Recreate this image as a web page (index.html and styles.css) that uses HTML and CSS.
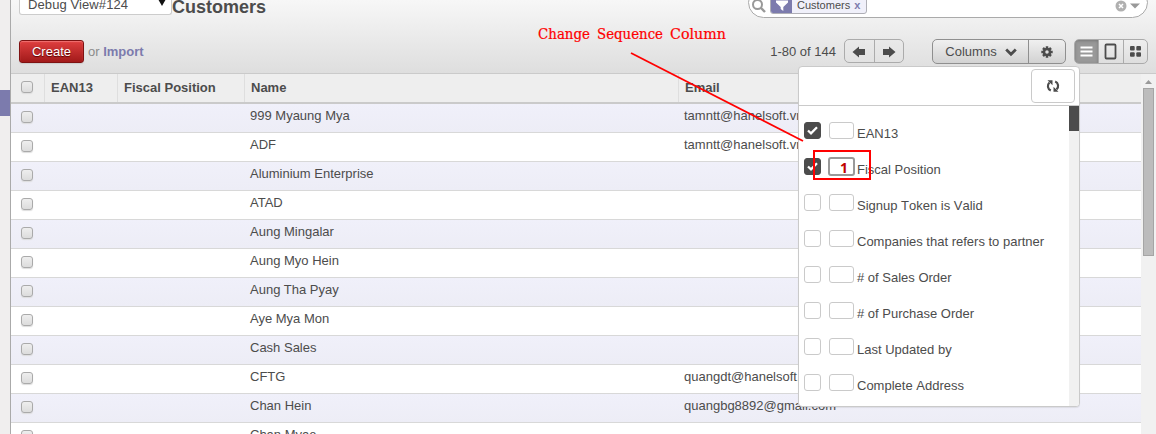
FILE: index.html
```html
<!DOCTYPE html>
<html lang="en">
<head>
<meta charset="utf-8">
<title>Customers</title>
<link rel="stylesheet" href="styles.css">
</head>
<body>
<div class="app">
  <aside class="sidebar"><div class="active-item"></div></aside>
  <main class="content">
    <header class="header">
      <div class="title-row">
        <div class="debug-select"><span>Debug View#124</span><svg width="8" height="7" viewBox="0 0 8 7"><path d="M0 0h8L4 7z" fill="#111"/></svg></div>
        <h1>Customers</h1>
        <div class="search">
          <svg class="lens" width="14" height="14" viewBox="0 0 14 14" fill="none" stroke="#999"><circle cx="5.5" cy="5.5" r="4.5" stroke-width="2"/><path d="M9 9l4 4" stroke-width="2.4"/></svg>
          <div class="facet"><span class="facet-icon"><svg width="12" height="14" viewBox="0 0 12 14"><path d="M0 2.500h12v2L7.300 9v4L4.700 11V9L0 4.500z" fill="#fff"/></svg></span><span class="facet-label">Customers <b>x</b></span></div>
          <svg class="clear" width="26" height="12" viewBox="0 0 26 12"><circle cx="6" cy="6" r="5.500" fill="#b0b0b0"/><path d="M4 4l4 4M8 4l-4 4" stroke="#fff" stroke-width="1.500"/><path d="M15 3.500h10L20 8.500z" fill="#999"/></svg>
        </div>
      </div>
      <div class="tool-row">
        <button class="create">Create</button>
        <span class="or">or <b>Import</b></span>
        <span class="range">1-80 of 144</span>
        <div class="group pager">
          <span><svg width="14" height="12" viewBox="0 0 14 12"><path d="M.5 6L7 .5V3h6v6H7v2.500z" fill="#4c4c4c"/></svg></span>
          <span><svg width="14" height="12" viewBox="0 0 14 12"><path d="M13.500 6L7 .5V3H1v6h6v2.500z" fill="#4c4c4c"/></svg></span>
        </div>
        <div class="group columns">
          <span class="columns-label">Columns <svg width="12" height="9" viewBox="0 0 12 9"><path d="M1.200 1.500L6 6.200l4.800-4.700" fill="none" stroke="#4c4c4c" stroke-width="2.800"/></svg></span>
          <span><svg width="12" height="12" viewBox="-6 -6 12 12"><circle r="3" fill="none" stroke="#4c4c4c" stroke-width="2.500"/><path d="M0-5.700v2M0 3.700v2M-5.700 0h2M3.700 0h2M-4-4l1.400 1.400M2.600 2.600L4 4M-4 4l1.400-1.400M2.600-2.600L4-4" stroke="#4c4c4c" stroke-width="2.500"/></svg></span>
        </div>
        <div class="group views">
          <span class="selected"><svg width="13" height="11" viewBox="0 0 13 11"><path d="M.5 1.500h12M.5 5.500h12M.5 9.500h12" stroke="#fff" stroke-width="1.800"/></svg></span>
          <span><svg width="13" height="17" viewBox="0 0 13 17"><rect x="1.500" y="1.500" width="10" height="14" rx="1" fill="none" stroke="#4c4c4c" stroke-width="1.800"/></svg></span>
          <span><svg width="11" height="11" viewBox="0 0 11 11" fill="#4c4c4c"><rect y="0" width="4.700" height="4.500" rx="1"/><rect x="6.300" y="0" width="4.700" height="4.500" rx="1"/><rect y="6.200" width="4.700" height="4.500" rx="1"/><rect x="6.300" y="6.200" width="4.700" height="4.500" rx="1"/></svg></span>
        </div>
      </div>
    </header>
    <div class="list-area">
      <div class="list">
        <div class="row head"><span><i class="check"></i></span><span>EAN13</span><span>Fiscal Position</span><span>Name</span><span>Email</span></div>
        <div class="row"><i class="check"></i><span class="name">999 Myaung Mya</span><span class="email">tamntt@hanelsoft.vn</span></div>
        <div class="row"><i class="check"></i><span class="name">ADF</span><span class="email">tamntt@hanelsoft.vn</span></div>
        <div class="row"><i class="check"></i><span class="name">Aluminium Enterprise</span></div>
        <div class="row"><i class="check"></i><span class="name">ATAD</span></div>
        <div class="row"><i class="check"></i><span class="name">Aung Mingalar</span></div>
        <div class="row"><i class="check"></i><span class="name">Aung Myo Hein</span></div>
        <div class="row"><i class="check"></i><span class="name">Aung Tha Pyay</span></div>
        <div class="row"><i class="check"></i><span class="name">Aye Mya Mon</span></div>
        <div class="row"><i class="check"></i><span class="name">Cash Sales</span></div>
        <div class="row"><i class="check"></i><span class="name">CFTG</span><span class="email">quangdt@hanelsoft.vn</span></div>
        <div class="row"><i class="check"></i><span class="name">Chan Hein</span><span class="email">quangbg8892@gmail.com</span></div>
        <div class="row"><i class="check"></i><span class="name">Chan Myae</span></div>
      </div>
      <div class="scrollbar"><svg width="7" height="4" viewBox="0 0 7 4"><path d="M0 4h7L3.500 0z" fill="#999"/></svg><div class="thumb"></div></div>
    </div>
  </main>

  <section class="menu">
    <div class="menu-head"><button class="refresh"><svg width="14" height="14" viewBox="0 0 14 14"><path d="M4.800 11.500A4.800 4.800 0 0 1 3.500 3.500M9.200 2.500a4.800 4.800 0 0 1 1.300 8" fill="none" stroke="#4c4c4c" stroke-width="2.200"/><path d="M1.500 1.300h5v5zM12.500 12.700h-5v-5z" fill="#4c4c4c"/></svg></button></div>
    <div class="menu-body">
      <div class="options">
        <div class="option"><i class="box on"><svg width="11" height="9" viewBox="0 0 11 9"><path d="M1 4.500L4 7.300 10 1.200" fill="none" stroke="#fff" stroke-width="2.300"/></svg></i><i class="seq"></i><span>EAN13</span></div>
        <div class="option"><i class="box on"><svg width="11" height="9" viewBox="0 0 11 9"><path d="M1 4.500L4 7.300 10 1.200" fill="none" stroke="#fff" stroke-width="2.300"/></svg></i><i class="seq focus">1</i><span>Fiscal Position</span></div>
        <div class="option"><i class="box"></i><i class="seq"></i><span>Signup Token is Valid</span></div>
        <div class="option"><i class="box"></i><i class="seq"></i><span>Companies that refers to partner</span></div>
        <div class="option"><i class="box"></i><i class="seq"></i><span># of Sales Order</span></div>
        <div class="option"><i class="box"></i><i class="seq"></i><span># of Purchase Order</span></div>
        <div class="option"><i class="box"></i><i class="seq"></i><span>Last Updated by</span></div>
        <div class="option"><i class="box"></i><i class="seq"></i><span>Complete Address</span></div>
      </div>
      <div class="menu-scroll"><div class="menu-thumb"></div></div>
    </div>
  </section>

  <svg class="annotation" width="1156" height="434" viewBox="0 0 1156 434">
    <text y="39"><tspan x="538" textLength="52" lengthAdjust="spacingAndGlyphs">Change</tspan> <tspan x="597" textLength="66" lengthAdjust="spacingAndGlyphs">Sequence</tspan> <tspan x="670" textLength="56" lengthAdjust="spacingAndGlyphs">Column</tspan></text>
    <path d="M631 53L803 141" stroke="#f00" stroke-width="1.800"/>
    <rect x="814" y="151" width="56" height="28" fill="none" stroke="#f00" stroke-width="2"/>
  </svg>
</div>
</body>
</html>
```

FILE: styles.css
```css
* { box-sizing: border-box; }
body { margin: 0; font: 13px/16px "Liberation Sans", Arial, sans-serif; color: #4c4c4c; }
h1 { margin: 0; }
i { font-style: normal; }
svg { display: block; flex: none; }
button { font: inherit; padding: 0; }
.app { position: relative; display: flex; width: 1156px; height: 434px; overflow: hidden; background: #fff; }
.sidebar { width: 11px; background: #f0eeee; border-right: 1px solid #aaa; padding-top: 90px; }
.active-item { height: 26px; background: #7c7bad; }
.content { flex: 1; min-width: 0; display: flex; flex-direction: column; }
.header { height: 74px; flex: none; border-bottom: 1px solid #cacaca; background: linear-gradient(#f7f7f7, #dedede); padding: 0 8px; }
.title-row { display: flex; align-items: flex-start; height: 39px; }
.debug-select { width: 153px; height: 15px; border: 1px solid #ccc; border-top: 0; border-radius: 0 0 3px 3px; background: #fff; display: flex; justify-content: space-between; padding: 0 5px 0 8px; }
.debug-select span { line-height: 16px; margin-top: -3px; letter-spacing: .1px; }
.debug-select svg { margin-top: -1px; }
h1 { font-size: 18px; line-height: 20px; margin-top: -3px; }
.search { margin-left: auto; width: 400px; height: 31px; margin-top: -13px; border: 1px solid #aaa; border-radius: 16px; background: #fff; display: flex; align-items: flex-start; padding: 0 6px 0 3px; }
.lens { margin-top: 11px; }
.facet { display: flex; margin: 5px 0 0 4px; height: 21px; width: 97px; border: 1px solid #afafb6; border-radius: 3px; background: #f0f0fa; overflow: hidden; font-size: 11px; }
.facet-icon { width: 21px; background: #7c7bad; display: flex; align-items: flex-end; justify-content: center; padding-bottom: 1px; }
.facet-label { padding: 3px 0 0 5px; white-space: nowrap; }
.facet b { color: #7c7bad; margin-left: 1px; font-weight: bold; }
.clear { margin: 12px 0 0 auto; }
.tool-row { display: flex; align-items: flex-start; height: 25px; }
.create { margin-top: 1px; width: 65px; height: 23px; border: 1px solid #7f1212; border-radius: 3px; background: linear-gradient(#df3f3f, #a21a1a); color: #fff; text-shadow: 0 1px 1px #500; box-shadow: 0 1px 1px #ccc, inset 0 1px 1px #f07070; }
.or { margin: 5px 0 0 4px; color: #8b8b8b; }
.or b { color: #7c7bad; }
.range { margin: 5px 0 0 auto; }
.group { display: flex; height: 25px; border: 1px solid #ababab; border-radius: 5px; background: linear-gradient(#eee, #dedede); overflow: hidden; }
.group > span { flex: 1; display: flex; align-items: center; justify-content: center; }
.group > span + span { border-left: 1px solid #ababab; }
.pager { width: 60px; height: 24px; margin-left: 8px; background: none; }
.pager svg { margin-top: 2px; }
.columns { margin-left: 28px; width: 134px; border-color: #8f8f8f; background: linear-gradient(#f0f0f0, #d2d2d2); }
.columns > span + span { border-color: #8f8f8f; }
.group .columns-label { flex: 0 0 95px; gap: 8px; padding-left: 1px; }
.columns-label svg { margin-top: 2px; }
.views { margin-left: 8px; width: 74px; }
.views .selected { background: #999; box-shadow: inset 0 1px 3px #777; }
.list-area { flex: 1; display: flex; min-height: 0; overflow: hidden; }
.list { flex: 1; }
.row { display: grid; grid-template-columns: 34px 73px 127px 434px 1fr; height: 29px; border-bottom: 1px solid #d8d8d8; }
.row:nth-child(even) { background: linear-gradient(#f0f0fa, #ededf6); }
.row.head { height: 30px; background: #eee; border-bottom: 2px solid #cacaca; font-weight: bold; }
.head > span { padding: 6px 0 0 6px; border-right: 1px solid #dedede; }
.head > span:first-child { padding: 0; }
.head > span:last-child { border: 0; }
.check { display: block; width: 12px; height: 12px; margin: 7px 0 0 10px; border: 1px solid #aaa; border-radius: 3px; background: linear-gradient(#eee, #dcdcdc); box-shadow: 0 1px 1px #ddd; }
.name { grid-column: 4; padding: 4px 0 0 5px; }
.email { grid-column: 5; padding: 4px 0 0 5px; }
.scrollbar { width: 15px; background: #f1f1f1; display: flex; flex-direction: column; align-items: center; padding-top: 6px; }
.thumb { width: 11px; height: 168px; margin-top: 4px; background: #bcbcbc; border: 1px solid #a5a5a5; }
.menu { position: absolute; left: 798px; top: 66px; width: 282px; height: 341px; background: #fff; border: 1px solid #cacaca; border-radius: 4px; box-shadow: 0 1px 1px rgba(0,0,0,.08); overflow: hidden; }
.menu-head { height: 39px; border-bottom: 1px solid #cacaca; display: flex; justify-content: flex-end; padding: 2px 4px 0; }
.refresh { width: 44px; height: 34px; border: 1px solid #cacaca; border-radius: 4px; background: #fff; display: flex; align-items: center; justify-content: center; }
.menu-body { display: flex; height: 300px; overflow: hidden; }
.options { flex: 1; padding: 16px 0 0 5px; font-kerning: none; }
.option { display: flex; align-items: flex-start; height: 36px; white-space: nowrap; }
.option span { margin: 4px 0 0 3px; }
.box { width: 17px; height: 17px; border: 1px solid #cacaca; border-radius: 3px; display: flex; align-items: center; justify-content: center; }
.box.on { background: #4c4c4c; border-color: #4c4c4c; }
.seq { width: 25px; height: 17px; margin-left: 8px; border: 1px solid #cacaca; border-radius: 3px; }
.seq.focus { width: 27px; height: 19px; margin: -1px -1px 0 7px; border: 2px solid #999; color: #c00000; font: bold 14px/17px "Open Sans", sans-serif; text-align: right; padding-right: 5px; }
.menu-scroll { width: 10px; background: #f1f1f1; }
.menu-thumb { height: 25px; background: #4c4c4c; }
.annotation { position: absolute; inset: 0; }
.annotation text { font: 15px "DejaVu Serif Condensed", "DejaVu Serif", serif; fill: #f00; stroke: #f00; stroke-width: .2px; }
```
